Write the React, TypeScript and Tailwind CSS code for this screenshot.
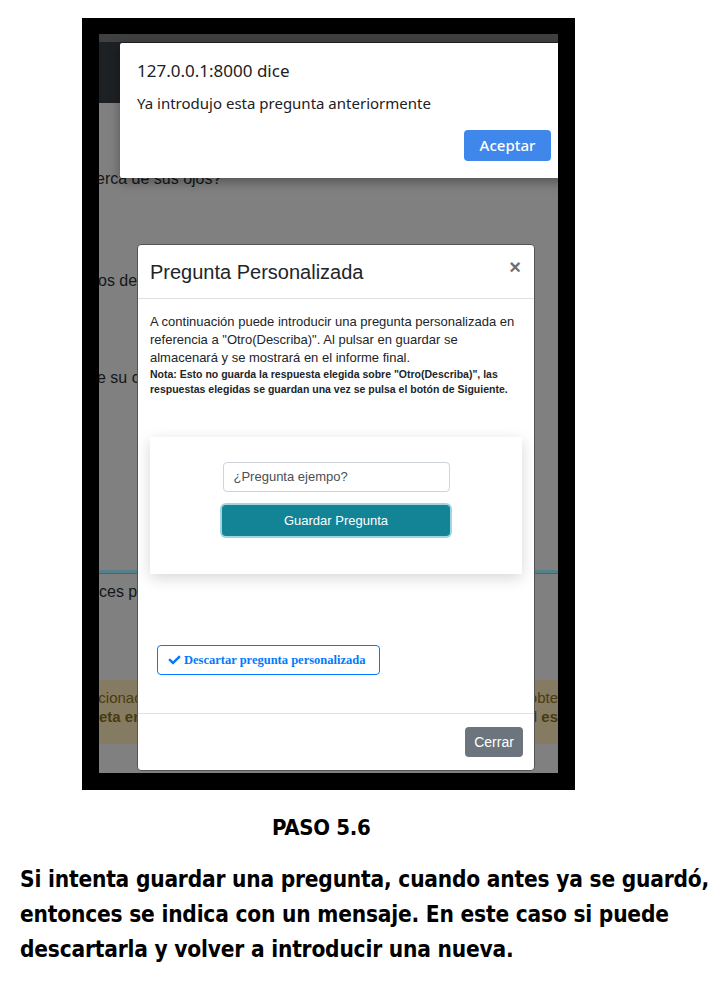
import React from "react";

const sans = "font-['Liberation_Sans',Arial,sans-serif]";

function CheckIcon() {
  return (
    <svg viewBox="0 0 512 512" width="13" height="12" className="fill-current shrink-0">
      <path d="M173.898 439.404l-166.4-166.4c-9.997-9.997-9.997-26.206 0-36.204l36.203-36.204c9.997-9.998 26.207-9.998 36.204 0L192 312.69 432.095 72.596c9.997-9.997 26.207-9.997 36.204 0l36.203 36.204c9.997 9.997 9.997 26.206 0 36.204l-294.4 294.401c-9.998 9.997-26.207 9.997-36.204-.001z" />
    </svg>
  );
}

function BrowserAlert() {
  return (
    <div className="absolute left-[21px] top-[9px] w-[448px] h-[135px] bg-white rounded-[2px] shadow-[0_4px_12px_rgba(0,0,0,0.35)] font-['Noto_Sans','Open_Sans',sans-serif] text-[#202124] flex flex-col px-[17px]">
      <div className="mt-[14px] text-[17px] leading-[28px]">127.0.0.1:8000 dice</div>
      <div className="mt-[6px] text-[15px] leading-[24px]">Ya introdujo esta pregunta anteriormente</div>
      <div className="flex justify-end mt-[15px]">
        <button className="w-[87px] h-[31px] rounded-[4px] bg-[#3f87ea] text-white text-[15px] font-medium">Aceptar</button>
      </div>
    </div>
  );
}

function Modal() {
  return (
    <div className={`absolute left-[38px] top-[210px] w-[398px] h-[527px] bg-white rounded-[4px] border border-[#555] flex flex-col ${sans} text-[#212529]`}>
      <div className="h-[54px] shrink-0 px-[12px] flex items-center justify-between border-b border-[#dee2e6]">
        <span className="text-[20px]">Pregunta Personalizada</span>
        <span className="text-[20px] font-bold text-[#6a717a] mr-[1px] -mt-[10px]">×</span>
      </div>
      <div className="px-[12px] pt-[14px]">
        <p className="text-[13px] leading-[18px]">
          A continuación puede introducir una pregunta personalizada en referencia a "Otro(Describa)". Al pulsar en guardar se almacenará y se mostrará en el informe final.
        </p>
        <p className="text-[10.5px] leading-[15px] font-bold">
          Nota: Esto no guarda la respuesta elegida sobre "Otro(Describa)", las respuestas elegidas se guardan una vez se pulsa el botón de Siguiente.
        </p>
      </div>
      <div className="mx-[12px] mt-[40px] h-[137px] shrink-0 bg-white shadow-[0_4px_14px_rgba(0,0,0,0.16)] flex flex-col items-center pt-[25px]">
        <div className="w-[227px] h-[30px] border border-[#ced4da] rounded-[4px] flex items-center px-[10px] text-[13px] text-[#495057]">
          ¿Pregunta ejempo?
        </div>
        <div className="mt-[13px] w-[228px] h-[31px] rounded-[4px] bg-[#138496] ring-[2px] ring-[#9fd6df] flex items-center justify-center text-[13px] text-white">
          Guardar Pregunta
        </div>
      </div>
      <div className="ml-[19px] mt-[71px] w-[223px] h-[30px] border border-[#007bff] rounded-[4px] flex items-center gap-[3px] px-[10px] text-[#007bff] font-['Liberation_Serif',serif] font-bold text-[12.5px] whitespace-nowrap">
        <CheckIcon />
        <span>Descartar pregunta personalizada</span>
      </div>
      <div className="mt-auto h-[57px] shrink-0 border-t border-[#dee2e6] flex justify-end items-start pt-[13px] pr-[11px]">
        <button className="w-[58px] h-[30px] rounded-[4px] bg-[#6c757d] text-white text-[14px]">Cerrar</button>
      </div>
    </div>
  );
}

function Screen() {
  return (
    <div className={`relative w-[459px] h-[739px] overflow-hidden bg-[#808080] flex flex-col ${sans} text-[16px] text-[#141618]`}>
      <div className="h-[8px] bg-[#404040]" />
      <div className="h-[61px] bg-[#1e2124]" />
      <div className="mt-[66px] h-[20px] leading-[20px] -ml-[3px]">erca de sus ojos?</div>
      <div className="mt-[82px] h-[20px] leading-[20px] -ml-[1px]">os de</div>
      <div className="mt-[77px] h-[20px] leading-[20px] -ml-[2px]">e su c</div>
      <div className="mt-[182px] h-[4px] bg-[#56818a] border-b border-[#3f6a72]" />
      <div className="mt-[8px] h-[20px] leading-[20px]">ces p</div>
      <div className="mt-[78px] h-[64px] bg-[#847b62] text-[#4a3a0f] pt-[8px] text-[15px] leading-[19px]">
        <div className="flex justify-between -ml-[4px]">
          <span>icionad</span>
          <span>obte</span>
        </div>
        <div className="flex justify-between font-bold">
          <span>eta en</span>
          <span>al es</span>
        </div>
      </div>
      <BrowserAlert />
      <Modal />
    </div>
  );
}

export default function App() {
  return (
    <div className="w-[727px] h-[998px] bg-white overflow-hidden">
      <div className="ml-[82px] mt-[18px] w-[493px] h-[772px] bg-black pt-[16px] pl-[17px]">
        <Screen />
      </div>
      <div className="font-['DejaVu_Sans_Condensed',sans-serif] font-bold text-black">
        <div className="mt-[24px] ml-[272px] text-[22px] leading-[28px] tracking-[-0.3px]">PASO 5.6</div>
        <p className="mt-[20px] ml-[20px] w-[700px] text-[22.5px] leading-[35px] tracking-[-0.2px]">
          Si intenta guardar una pregunta, cuando antes ya se guardó, entonces se indica con un mensaje. En este caso si puede descartarla y volver a introducir una nueva.
        </p>
      </div>
    </div>
  );
}
